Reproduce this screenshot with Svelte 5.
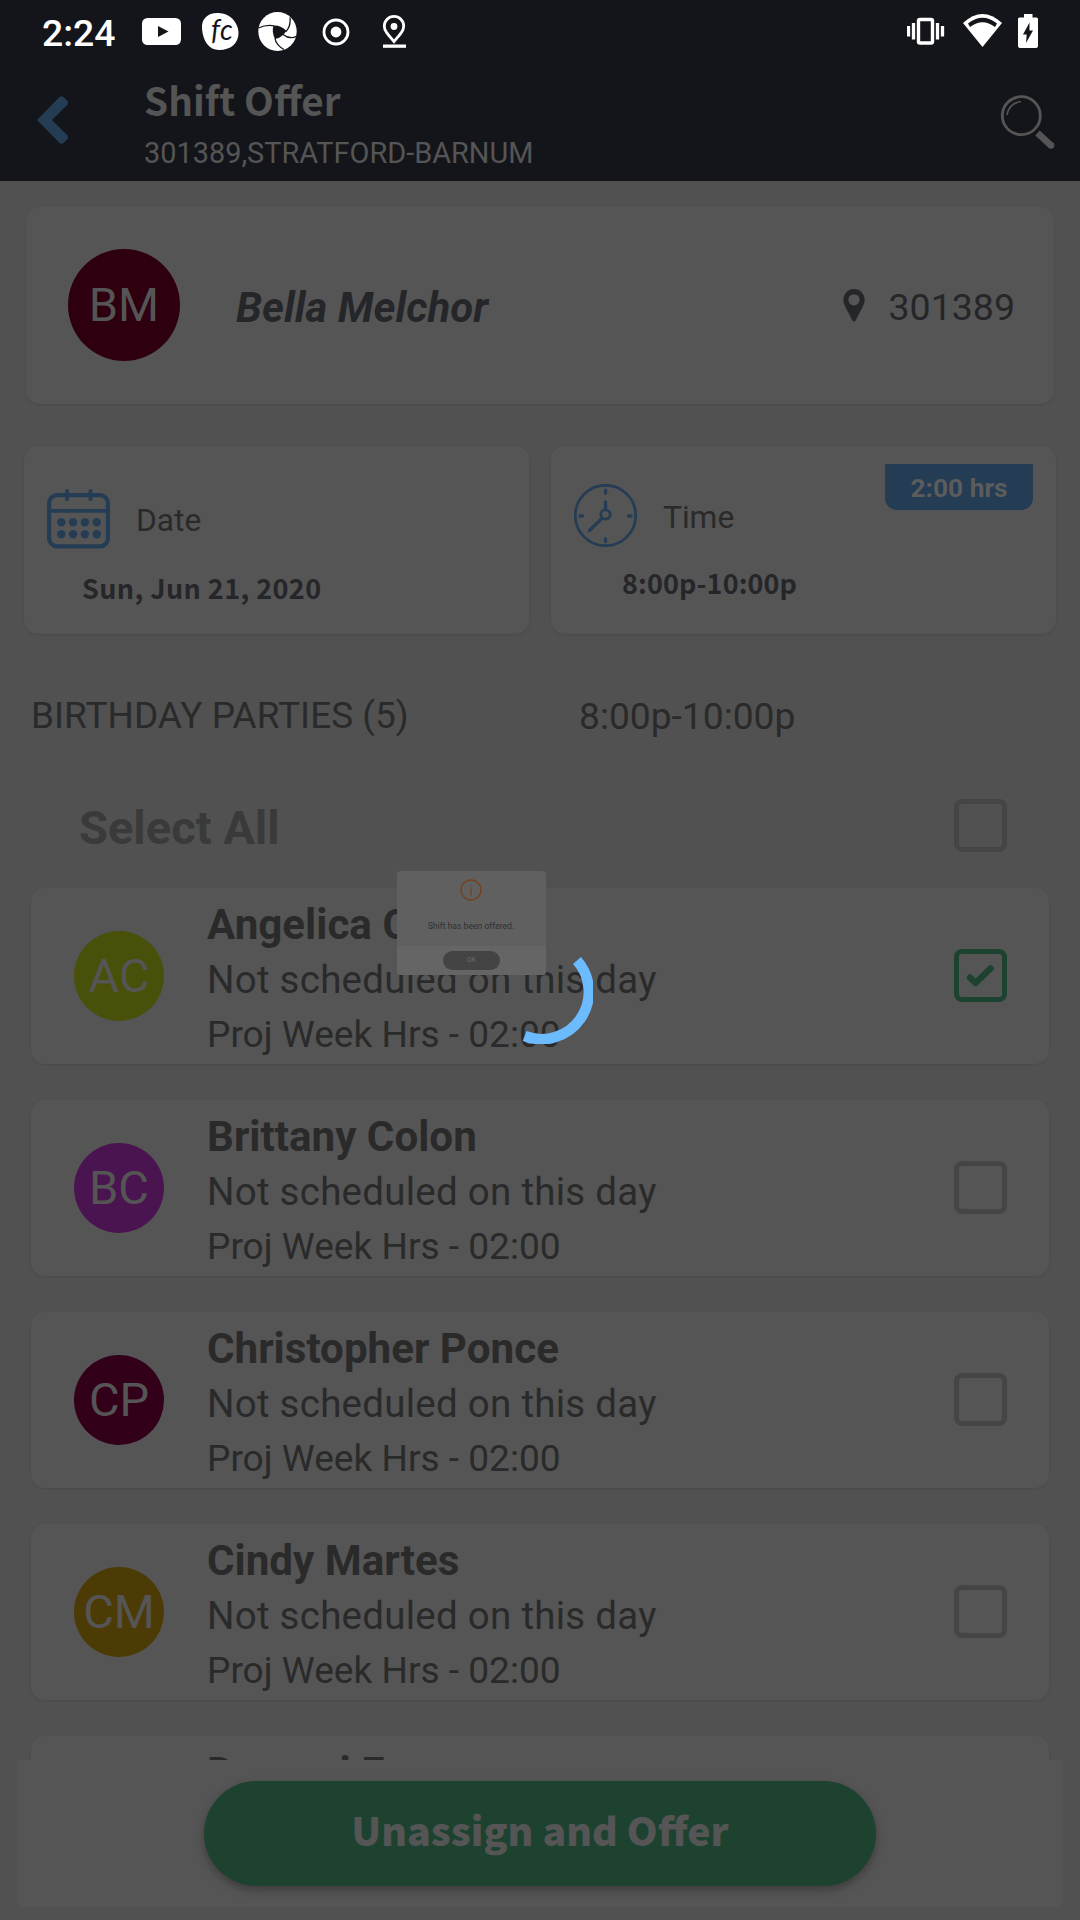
<script>
  const people = [
    { initials: 'AC', name: 'Angelica C', tone: 'lime', checked: true },
    { initials: 'BC', name: 'Brittany Colon', tone: 'purple', checked: false },
    { initials: 'CP', name: 'Christopher Ponce', tone: 'wine', checked: false },
    { initials: 'CM', name: 'Cindy Martes', tone: 'amber', checked: false },
    { initials: '', name: 'Damani F', tone: 'none', checked: false }
  ];
  const dots = [0, 1, 2, 3];
</script>

<div class="screen">
  <div class="status">
    <span class="clock">2:24</span>
    <svg class="s-yt" width="39" height="52" viewBox="142 0 39 52">
      <rect x="142" y="18" width="39" height="27" rx="5.500" fill="#fff" />
      <path d="M158 26v11l10.500-5.500z" fill="#14151a" />
    </svg>
    <svg class="s-fc" width="37" height="52" viewBox="202 0 37 52">
      <path d="M202 29C201 19 208 13 217 13C228 12 238 21 238.500 32C239 43 231 50 219 50C209 50 203 41 202 29Z" fill="#fff" />
      <text x="211" y="40" class="fc">fc</text>
    </svg>
    <svg class="s-swirl" width="39" height="52" viewBox="258 0 39 52">
      <ellipse cx="277.500" cy="31.500" rx="19.200" ry="19.500" fill="#fff" />
      <path d="M273.500 25.500Q281 25 286.500 31L283.500 34.500Q279 38.500 275 39Q271.500 32 273.500 25.500Z" fill="#14151a" />
      <path d="M258.500 28Q266 24.500 274 25.800M290 17.500Q291 26 286 31.500M297 36Q290 40 283 34.500M284 49.500Q276 45 275 38.500" fill="none" stroke="#14151a" stroke-width="1.300" />
    </svg>
    <svg class="s-rec" width="28" height="52" viewBox="322 0 28 52">
      <circle cx="336" cy="32" r="12" fill="none" stroke="#fff" stroke-width="2.800" />
      <circle cx="336" cy="32" r="5.400" fill="#fff" />
    </svg>
    <svg class="s-loc" width="24" height="52" viewBox="382 0 24 52">
      <path d="M394 41.500C387 33.500 384.300 30.500 384.300 26a9.700 9.700 0 0 1 19.400 0C403.700 30.500 401 33.500 394 41.500Z" fill="none" stroke="#fff" stroke-width="2.800" />
      <circle cx="394" cy="26.500" r="3.400" fill="#fff" />
      <rect x="383" y="44.500" width="23" height="3.300" fill="#fff" />
    </svg>
    <svg class="s-vib" width="38" height="52" viewBox="907 0 38 52">
      <rect x="918.500" y="19.500" width="14" height="23.500" rx="1.500" fill="none" stroke="#fff" stroke-width="3.400" />
      <path d="M908.500 26v10.500M913.500 23v16.500M937.500 23v16.500M942.500 26v10.500" stroke="#fff" stroke-width="3.300" />
    </svg>
    <svg class="s-wifi" width="40" height="52" viewBox="963 0 40 52">
      <path d="M963 23Q982.500 5 1002 23L982.500 47Z" fill="#fff" />
      <path d="M968 23.500Q982.500 12 997 23.500L995 27Q982.500 17.500 970 27Z" fill="#14151a" />
    </svg>
    <svg class="s-bat" width="20" height="52" viewBox="1018 0 20 52">
      <path d="M1024 14h8.500v3.500h4q1.500 0 1.500 1.500v27q0 2-2 2h-16q-2 0-2-2v-27q0-1.500 1.500-1.500h4.500z" fill="#fff" />
      <path d="M1029.500 22.500L1023 34.500h3.700L1026 43L1033 30.500h-3.500z" fill="#14151a" />
    </svg>
  </div>

  <header>
    <svg class="back" width="31" height="48" viewBox="0 0 31 48">
      <path d="M0 24L22.500 1Q24.500-.5 26.500 1L30.500 5Q31.500 6.500 30.500 8.500L15 24L30.500 39.500Q31.500 41.500 30.500 43L26.500 47Q24.500 48.500 22.500 47Z" fill="#243d54" />
    </svg>
    <div class="titles">
      <h1>Shift Offer</h1>
      <p>301389,STRATFORD-BARNUM</p>
    </div>
    <svg class="search" width="54" height="54" viewBox="0 0 54 54" fill="none" stroke="#555">
      <circle cx="20.300" cy="20.700" r="19" stroke-width="2.800" />
      <path d="M6 20Q8 8 20 6.500" stroke-width="1.600" />
      <path d="M36.500 38L50 50.500" stroke-width="6.600" />
      <circle cx="50" cy="50.300" r="2.600" fill="#555" stroke-width="1.500" />
    </svg>
  </header>

  <section class="card owner">
    <span class="avatar big">BM</span>
    <span class="owner-name">Bella Melchor</span>
    <svg class="pin" width="22" height="33" viewBox="0 0 22 33">
      <path fill-rule="evenodd" d="M11 0A10.700 10.700 0 0 1 21.700 11C21.700 16 15.500 25 13 31Q11 34 9 31C6.500 25 .3 16 .3 11A10.700 10.700 0 0 1 11 0ZM11 5.200A5.600 5.600 0 1 0 11 16.500A5.600 5.600 0 1 0 11 5.200Z" fill="#25262a" />
    </svg>
    <span class="store">301389</span>
  </section>

  <section class="facts">
    <div class="card fact">
      <div class="fact-head date">
        <svg width="63" height="60" viewBox="0 0 63 60" fill="none" stroke="#243d54">
          <rect x="2.100" y="6.100" width="58.800" height="51.300" rx="8" stroke-width="4.200" />
          <path d="M2 21.800h59" stroke-width="3.800" />
          <path d="M20 2v8.300M43.500 2v8.300" stroke-width="4" stroke-linecap="round" />
          {#each dots as d}
            <circle cx={14.3 + d * 11.8} cy="33.300" r="4.200" fill="#243d54" stroke="none" />
            <circle cx={14.3 + d * 11.8} cy="45.300" r="4.200" fill="#243d54" stroke="none" />
          {/each}
        </svg>
        <span>Date</span>
      </div>
      <div class="fact-value day">Sun, Jun 21, 2020</div>
    </div>
    <div class="card fact">
      <div class="fact-head time">
        <svg width="63" height="63" viewBox="0 0 63 63" fill="none" stroke="#243d54" stroke-linecap="round">
          <circle cx="31.500" cy="31.500" r="30.200" stroke-width="2.700" />
          <path d="M31.500 6.500v2.500M31.500 55v2.500M6 32h2.500M54.500 32h2.500" stroke-width="3.300" />
          <circle cx="31.500" cy="30.500" r="4.700" stroke-width="2.800" />
          <path d="M31.500 25.500v-7.500M27.800 34.500L15.500 46.500" stroke-width="3.300" />
        </svg>
        <span>Time</span>
      </div>
      <div class="fact-value hours">8:00p-10:00p</div>
      <span class="badge">2:00 hrs</span>
    </div>
  </section>

  <div class="group">
    <span class="group-name">BIRTHDAY PARTIES (5)</span>
    <span class="group-time">8:00p-10:00p</span>
  </div>

  <div class="select-all">
    <span>Select All</span>
    <i class="box"></i>
  </div>

  <main>
    {#each people as p}
      <article class="card person">
        <span class="avatar small {p.tone}">{p.initials}</span>
        <div class="info">
          <strong>{p.name}</strong>
          <span class="when">Not scheduled on this day</span>
          <span class="proj">Proj Week Hrs - 02:00</span>
        </div>
        <i class="box" class:on={p.checked}>
          {#if p.checked}
            <svg width="43" height="43" viewBox="0 0 43 43">
              <path d="M11 23.500L16.500 29L31.500 14.500" fill="none" stroke="#1e4230" stroke-width="6.500" stroke-linecap="round" stroke-linejoin="round" />
            </svg>
          {/if}
        </i>
      </article>
    {/each}
  </main>

  <footer>
    <button>Unassign and Offer</button>
  </footer>

  <div class="popup">
    <div class="popup-body">
      <svg width="22" height="22" viewBox="0 0 22 22" fill="none" stroke="#74421f">
        <circle cx="11" cy="11" r="10" stroke-width="1.400" />
        <path d="M11 9.500v7M11 6v1.600" stroke-width="1.400" />
      </svg>
      <span>Shift has been offered.</span>
    </div>
    <div class="popup-foot"><span>OK</span></div>
  </div>

  <svg class="spinner" width="106" height="106" viewBox="487 938 106 106">
    <path d="M577 960.500A47.300 47.300 0 0 1 524.600 1036" fill="none" stroke="#6cbbff" stroke-width="10.500" />
  </svg>
</div>

<style>
  :global(body) { margin: 0; background: #515151; }
  .screen {
    position: relative;
    display: flex;
    flex-direction: column;
    width: 1080px;
    height: 1920px;
    overflow: hidden;
    background: #515151;
    font-family: Roboto, sans-serif;
    color: #2a2a2a;
  }
  svg { display: block; flex: none; }
  span { white-space: nowrap; }

  .status {
    display: flex;
    flex: none;
    box-sizing: border-box;
    height: 64px;
    padding: 0 42px;
    background: #14151a;
  }
  .clock {
    width: 100px;
    font-size: 37.300px;
    font-weight: 500;
    line-height: 66px;
    color: #fff;
  }
  .fc { font: italic 400 28px Lato, sans-serif; fill: #14151a; letter-spacing: .5px; }
  .s-fc { margin-left: 21px; }
  .s-swirl { margin-left: 19px; }
  .s-rec { margin-left: 25px; }
  .s-loc { margin-left: 32px; }
  .s-vib { margin-left: auto; }
  .s-wifi { margin-left: 18px; }
  .s-bat { margin-left: 15px; }

  header {
    display: flex;
    flex: none;
    box-sizing: border-box;
    height: 117px;
    padding: 12px 25px 0 37px;
    background: #14151a;
    color: #555;
  }
  .back { margin-top: 20px; }
  .titles { flex: 1; margin-left: 76px; }
  h1 {
    margin: 0;
    font: 700 38.700px/46px "Noto Sans CJK JP", sans-serif;
  }
  header p { margin: 14px 0 0; font-size: 28.900px; line-height: 34px; }
  .search { margin-top: 19px; }

  .card {
    background: #555;
    border-radius: 14px;
    box-shadow: 0 1px 2px #4a4a4a;
  }
  .avatar {
    display: flex;
    flex: none;
    align-items: center;
    justify-content: center;
    width: 90px;
    height: 90px;
    border-radius: 50%;
    font-size: 47px;
    line-height: 90px;
    color: #555;
  }
  .small { margin-top: 2px; }
  .big { width: 112px; height: 112px; background: #2e000f; }
  .lime { background: #485009; }
  .purple { background: #4a1450; }
  .wine { background: #33001a; }
  .amber { background: #4d3b06; }

  .owner {
    display: flex;
    flex: none;
    align-items: center;
    box-sizing: border-box;
    height: 197px;
    margin: 26px 26px 0;
    padding: 0 39px 2px 42px;
    color: #25262a;
  }
  .owner-name {
    margin: 5px auto 0 56px;
    font-size: 42px;
    font-style: italic;
    font-weight: 700;
  }
  .pin { margin: 1px 24px 0 0; }
  .store { padding-top: 5px; font-size: 37.500px; }

  .facts {
    display: flex;
    flex: none;
    gap: 22px;
    margin: 42px 24px 0;
  }
  .fact { position: relative; flex: 1; height: 188px; }
  .fact-head {
    display: flex;
    align-items: center;
    gap: 26px;
    padding-left: 23px;
    font-size: 31.700px;
    line-height: 36px;
  }
  .fact-head span { padding-top: 3px; }
  .date { margin-top: 43px; }
  .time { margin-top: 38px; }
  .time span { padding-top: 4px; }
  .fact-value {
    font: 700 27px/40px "Noto Sans CJK JP", sans-serif;
    color: #25262a;
  }
  .day { margin: 19px 0 0 58px; letter-spacing: .4px; }
  .hours { margin: 16px 0 0 71px; letter-spacing: .1px; }
  .badge {
    position: absolute;
    top: 18px;
    right: 23px;
    width: 148px;
    height: 46px;
    border-radius: 0 0 12px 12px;
    background: #243d54;
    color: #5c5c5c;
    font-size: 26.300px;
    font-weight: 700;
    line-height: 48px;
    text-align: center;
  }

  .group {
    display: flex;
    flex: none;
    height: 60px;
    margin-top: 52px;
    padding-left: 31px;
    line-height: 60px;
  }
  .group-name { width: 548px; font-size: 37px; }
  .group-time { font-size: 37.200px; }

  .select-all {
    display: flex;
    flex: none;
    align-items: center;
    justify-content: space-between;
    height: 60px;
    margin: 49px 73px 33px 79px;
    font-size: 47px;
    font-weight: 700;
    color: #3a3a3a;
  }
  .select-all span { padding-top: 4px; }
  .box {
    flex: none;
    box-sizing: border-box;
    width: 53px;
    height: 53px;
    border: 5px solid #444546;
    border-radius: 8px;
  }
  .box.on { border-color: #1e4230; }

  main { flex: 1; min-height: 0; overflow: hidden; padding: 0 31px; margin-top: -10px; padding-top: 10px; }
  .person {
    display: flex;
    align-items: center;
    box-sizing: border-box;
    height: 176px;
    margin-bottom: 36px;
    padding: 0 42px 2px 43px;
  }
  .info {
    display: flex;
    flex: 1;
    flex-direction: column;
    margin-left: 43px;
    padding-top: 7px;
    font-size: 37px;
    line-height: 54px;
  }
  .when { font-size: 38.500px; letter-spacing: .26px; }
  .proj { margin: 1px 0 -1px; font-size: 37.100px; }
  .info strong { font-size: 42.150px; font-weight: 700; line-height: 56px; }

  footer {
    display: flex;
    flex: none;
    box-sizing: border-box;
    height: 147px;
    margin: 0 18px 13px;
    padding-top: 21px;
    justify-content: center;
    align-items: flex-start;
    background: #555;
  }
  button {
    width: 672px;
    height: 105px;
    padding: 0 0 9px;
    border: 0;
    border-radius: 53px;
    background: #1e4230;
    box-shadow: 0 4px 8px #3e3c3d;
    color: #555;
    font: 900 39.250px/56px "Noto Sans CJK JP", sans-serif;
  }

  .popup {
    position: absolute;
    left: 397px;
    top: 871px;
    width: 149px;
    height: 104px;
    border-radius: 4px;
    overflow: hidden;
    background: #606060;
  }
  .popup-body {
    display: flex;
    flex-direction: column;
    align-items: center;
    box-sizing: border-box;
    height: 75px;
    padding: 8px 1px 0 0;
    font-size: 8.600px;
    line-height: 12px;
    color: #303030;
  }
  .popup-body span { margin-top: 19px; }
  .popup-foot {
    display: flex;
    justify-content: center;
    height: 29px;
    padding-top: 5px;
    background: #656565;
  }
  .popup-foot span {
    width: 57px;
    height: 19px;
    border-radius: 10px;
    background: #444;
    color: #6c6c6c;
    font-size: 6.500px;
    line-height: 19px;
    text-align: center;
  }
  .spinner { position: absolute; left: 487px; top: 938px; }
</style>
